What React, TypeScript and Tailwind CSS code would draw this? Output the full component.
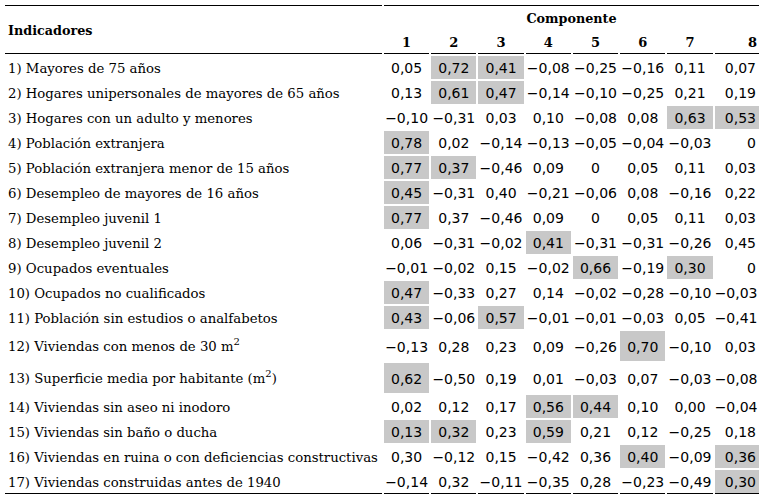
import React from "react"

type Row = {
  label: React.ReactNode
  values: string[]
  tall?: boolean
}

// values marked with * are the highlighted loadings
const rows: Row[] = [
  { label: "1) Mayores de 75 años", values: ["0,05", "0,72*", "0,41*", "−0,08", "−0,25", "−0,16", "0,11", "0,07"] },
  { label: "2) Hogares unipersonales de mayores de 65 años", values: ["0,13", "0,61*", "0,47*", "−0,14", "−0,10", "−0,25", "0,21", "0,19"] },
  { label: "3) Hogares con un adulto y menores", values: ["−0,10", "−0,31", "0,03", "0,10", "−0,08", "0,08", "0,63*", "0,53*"] },
  { label: "4) Población extranjera", values: ["0,78*", "0,02", "−0,14", "−0,13", "−0,05", "−0,04", "−0,03", "0"] },
  { label: "5) Población extranjera menor de 15 años", values: ["0,77*", "0,37*", "−0,46", "0,09", "0", "0,05", "0,11", "0,03"] },
  { label: "6) Desempleo de mayores de 16 años", values: ["0,45*", "−0,31", "0,40", "−0,21", "−0,06", "0,08", "−0,16", "0,22"] },
  { label: "7) Desempleo juvenil 1", values: ["0,77*", "0,37", "−0,46", "0,09", "0", "0,05", "0,11", "0,03"] },
  { label: "8) Desempleo juvenil 2", values: ["0,06", "−0,31", "−0,02", "0,41*", "−0,31", "−0,31", "−0,26", "0,45"] },
  { label: "9) Ocupados eventuales", values: ["−0,01", "−0,02", "0,15", "−0,02", "0,66*", "−0,19", "0,30*", "0"] },
  { label: "10) Ocupados no cualificados", values: ["0,47*", "−0,33", "0,27", "0,14", "−0,02", "−0,28", "−0,10", "−0,03"] },
  { label: "11) Población sin estudios o analfabetos", values: ["0,43*", "−0,06", "0,57*", "−0,01", "−0,01", "−0,03", "0,05", "−0,41"] },
  {
    label: (
      <>
        12) Viviendas con menos de 30 m<sup className="relative -top-[0.6em] text-[10px]">2</sup>
      </>
    ),
    values: ["−0,13", "0,28", "0,23", "0,09", "−0,26", "0,70*", "−0,10", "0,03"],
    tall: true,
  },
  {
    label: (
      <>
        13) Superficie media por habitante (m<sup className="relative -top-[0.6em] text-[10px]">2</sup>)
      </>
    ),
    values: ["0,62*", "−0,50", "0,19", "0,01", "−0,03", "0,07", "−0,03", "−0,08"],
    tall: true,
  },
  { label: "14) Viviendas sin aseo ni inodoro", values: ["0,02", "0,12", "0,17", "0,56*", "0,44*", "0,10", "0,00", "−0,04"] },
  { label: "15) Viviendas sin baño o ducha", values: ["0,13*", "0,32*", "0,23", "0,59*", "0,21", "0,12", "−0,25", "0,18"] },
  { label: "16) Viviendas en ruina o con deficiencias constructivas", values: ["0,30", "−0,12", "0,15", "−0,42", "0,36", "0,40*", "−0,09", "0,36*"] },
  { label: "17) Viviendas construidas antes de 1940", values: ["−0,14", "0,32", "−0,11", "−0,35", "0,28", "−0,23", "−0,49", "0,30*"] },
]

const serif = "font-['DejaVu_Serif',serif]"
const sans = "font-['DejaVu_Sans',sans-serif]"

export default function App() {
  return (
    <div className="w-[761px] h-[498px] bg-white text-black pl-[3px] pt-[3px]">
      <table className="table-fixed border-separate border-spacing-[2px] w-[758px]">
        <colgroup>
          <col className="w-[375px]" />
          <col className="w-[45px]" />
          <col className="w-[45px]" />
          <col className="w-[45px]" />
          <col className="w-[45px]" />
          <col className="w-[45px]" />
          <col className="w-[45px]" />
          <col className="w-[45px]" />
          <col className="w-[44px]" />
        </colgroup>
        <thead>
          <tr>
            <th
              rowSpan={2}
              className={`${serif} text-[12.75px] font-bold text-left align-middle pl-[3px] pt-[2px] border-t border-b border-black`}
            >
              Indicadores
            </th>
            <th colSpan={8} className={`${serif} text-[12.75px] font-bold text-center h-[25px] pt-[1px] border-t border-black`}>
              Componente
            </th>
          </tr>
          <tr>
            {[1, 2, 3, 4, 5, 6, 7, 8].map((n) => (
              <th
                key={n}
                className={`${serif} text-[13px] font-bold h-[22px] pt-[1px] border-b border-black p-0 ${
                  n === 8 ? "text-right pr-[2px]" : "text-center"
                }`}
              >
                {n}
              </th>
            ))}
          </tr>
        </thead>
        <tbody>
          {rows.map((row, i) => {
            const last = i === rows.length - 1
            return (
              <tr key={i}>
                <td
                  className={`${serif} text-[13.25px] whitespace-nowrap pl-[3px] pt-[2px] p-0 align-middle ${
                    row.tall ? "h-[30px]" : "h-[23px]"
                  } ${last ? "border-b border-black" : ""}`}
                >
                  {row.label}
                </td>
                {row.values.map((v, j) => {
                  const marked = v.endsWith("*")
                  const text = marked ? v.slice(0, -1) : v
                  return (
                    <td
                      key={j}
                      className={`${sans} text-[14px] whitespace-nowrap p-0 pt-[2px] align-middle ${
                        j === 7 ? "text-right pr-[3px]" : "text-center"
                      } ${marked ? "bg-[#c8c8c8]" : ""} ${last ? "border-b border-black" : ""}`}
                    >
                      {text}
                    </td>
                  )
                })}
              </tr>
            )
          })}
        </tbody>
      </table>
    </div>
  )
}
